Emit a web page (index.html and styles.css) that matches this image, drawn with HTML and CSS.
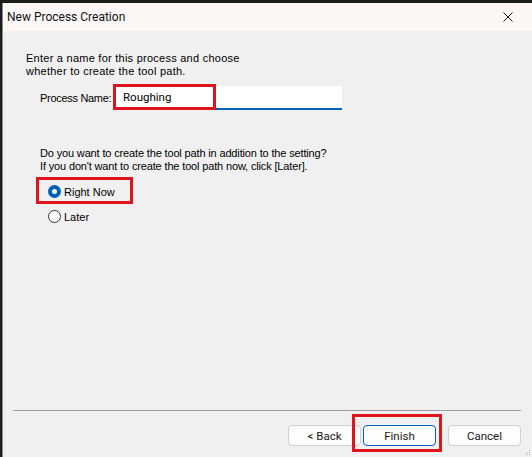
FILE: index.html
```html
<!DOCTYPE html>
<html lang="en">

<head>
    <meta charset="UTF-8">
    <title>New Process Creation</title>
    <link rel="stylesheet" href="styles.css">
</head>

<body>
    <div class="window">
        <div class="titlebar">
            <span class="title">New Process Creation</span>
            <svg class="close" width="10" height="10" viewBox="0 0 10 10">
                <path d="M0.5 0.5 L9.5 9.5 M9.5 0.5 L0.5 9.5" stroke="#1a1a1a" stroke-width="1" fill="none" />
            </svg>
        </div>

        <div class="content">
            <p class="intro">Enter a name for this process and choose<br>whether to create the tool path.</p>

            <div class="name-row">
                <label class="name-label">Process Name:</label>
                <div class="name-input">
                    <span>Roughing</span>
                    <div class="mark mark-input"></div>
                </div>
            </div>

            <p class="question">Do you want to create the tool path in addition to the setting?<br>If you don't want to create the tool path now, click [Later].</p>

            <div class="radios">
                <div class="radio-row">
                    <span class="radio checked"></span>
                    <span>Right Now</span>
                    <div class="mark mark-radio"></div>
                </div>
                <div class="radio-row">
                    <span class="radio"></span>
                    <span>Later</span>
                </div>
            </div>
        </div>

        <div class="footer">
            <div class="separator"></div>
            <div class="buttons">
                <button class="btn">&lt; Back</button>
                <button class="btn primary">Finish<span class="mark mark-finish"></span></button>
                <button class="btn cancel">Cancel</button>
            </div>
            <svg class="grip" width="7" height="7" viewBox="0 0 7 7">
                <rect x="5" y="1" width="1" height="1" fill="#b8b8b8" />
                <rect x="3" y="3" width="1" height="1" fill="#b8b8b8" />
                <rect x="5" y="3" width="1" height="1" fill="#b8b8b8" />
                <rect x="1" y="5" width="1" height="1" fill="#b8b8b8" />
                <rect x="3" y="5" width="1" height="1" fill="#b8b8b8" />
                <rect x="5" y="5" width="1" height="1" fill="#b8b8b8" />
            </svg>
        </div>
    </div>
</body>

</html>
```

FILE: styles.css
```css
/* Page behind the dialog */

body {
    margin: 0;
    background: #1c1c1c;
    overflow: hidden;
    font-family: 'Liberation Sans', Arial, sans-serif;
    font-size: 11px;
    color: #000;
}

/* Dialog window */

.window {
    position: relative;
    margin: 3px 0 0 2px;
    height: 454px;
    border-left: 1px solid #8c8c8c;
    background-color: #f0f0f0;
    display: flex;
    flex-direction: column;
}

.titlebar {
    height: 28px;
    flex: none;
    background-color: #fbf7f7;
    display: flex;
    align-items: center;
    justify-content: space-between;
    padding: 0 19px 0 4px;
}

.title {
    font-family: Roboto, sans-serif;
    font-size: 12px;
    color: #111;
}

/* Body of the dialog */

.content {
    flex: 1;
    padding: 21px 0 0 23px;
}

p {
    margin: 0;
    line-height: 13px;
}

.intro {
    letter-spacing: 0.25px;
}

.name-row {
    display: flex;
    align-items: center;
    margin-top: 7px;
    padding-left: 14px;
    height: 26px;
}

.name-label {
    flex: none;
    width: 76px;
    white-space: nowrap;
    letter-spacing: -0.3px;
}

.name-input {
    position: relative;
    width: 219px;
    height: 22px;
    padding-left: 7px;
    background-color: #fff;
    border-bottom: 2px solid #005fb8;
    display: flex;
    align-items: center;
    font-family: Roboto, sans-serif;
    font-size: 11.5px;
}

.question {
    margin-top: 36px;
    padding-left: 14px;
    letter-spacing: -0.15px;
}

.radios {
    margin-top: 10px;
    padding-left: 22px;
}

.radio-row {
    position: relative;
    display: flex;
    align-items: center;
    gap: 3px;
    height: 17px;
    margin-bottom: 8px;
}

.radio {
    width: 11px;
    height: 11px;
    border: 1px solid #333;
    border-radius: 50%;
    background-color: #fff;
}

.radio.checked {
    width: 5px;
    height: 5px;
    border: 4px solid #005fb8;
    background-color: #fff;
}

/* Red annotation boxes */

.mark {
    position: absolute;
    border: 3px solid #e0141e;
    box-sizing: border-box;
}

.mark-input {
    left: -3px;
    top: -2px;
    width: 103px;
    height: 26px;
}

.mark-radio {
    left: -12px;
    top: -6px;
    width: 97px;
    height: 27px;
}

.mark-finish {
    left: -12px;
    top: -12px;
    width: 90px;
    height: 38px;
}

/* Footer with buttons */

.footer {
    position: relative;
    flex: none;
    height: 47px;
}

.separator {
    height: 1px;
    margin: 0 11px 0 10px;
    background-color: #a0a0a0;
}

.buttons {
    display: flex;
    justify-content: flex-end;
    padding: 14px 11px 0 0;
}

.btn {
    position: relative;
    width: 73px;
    height: 21px;
    margin: 0 0 0 2px;
    padding: 0;
    background-color: #fdfdfd;
    border: 1px solid #d0d0d0;
    border-radius: 4px;
    font-family: Roboto, sans-serif;
    font-size: 11.5px;
    color: #1a1a1a;
}

.btn.primary {
    border-color: #005fb8;
}

.btn.cancel {
    margin-left: 12px;
}

.grip {
    position: absolute;
    right: 1px;
    bottom: 1px;
}
```
